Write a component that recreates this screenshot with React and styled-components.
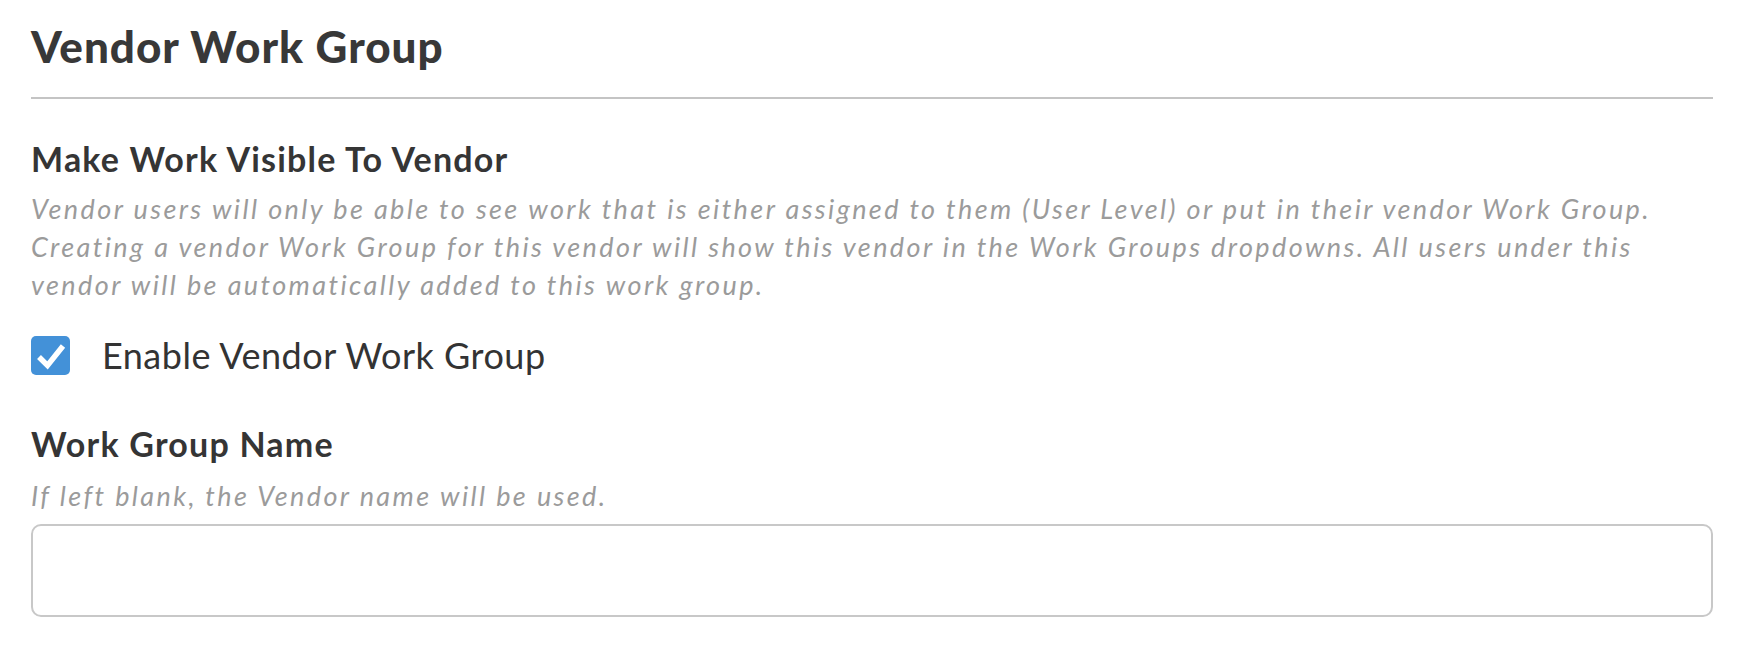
import React, { useState } from "react";
import styled, { createGlobalStyle } from "styled-components";

const GlobalStyle = createGlobalStyle`
  body {
    margin: 0;
    background: #fff;
    font-family: Lato, "Open Sans", Arial, sans-serif;
    color: #333;
  }
`;

const Page = styled.div`
  padding: 21px 31px 0 31px;
`;

const SectionTitle = styled.h1`
  margin: 0;
  font-size: 44px;
  line-height: 50px;
  font-weight: 900;
  letter-spacing: 1px;
  color: #383838;
  padding-bottom: 26px;
  border-bottom: 2px solid #c4c4c4;
`;

const Field = styled.div`
  margin-top: ${(p) => p.top}px;
`;

const Label = styled.div`
  font-size: 34px;
  line-height: 40px;
  font-weight: 700;
  letter-spacing: 1.2px;
  color: #353535;
`;

const Help = styled.p`
  margin: ${(p) => p.gap || 0}px 0 0;
  font-size: 27px;
  line-height: 38px;
  font-style: italic;
  letter-spacing: 2.4px;
  color: #9b9b9b;
`;

const CheckRow = styled.label`
  display: flex;
  align-items: center;
  gap: 32px;
  margin-top: 31px;
  cursor: pointer;
`;

const Box = styled.span`
  box-sizing: border-box;
  width: 39px;
  height: 39px;
  border-radius: 5px;
  background: ${(p) => (p.checked ? "#4391d8" : "#fff")};
  border: ${(p) => (p.checked ? "none" : "2px solid #c8c8c8")};
  display: flex;
  flex-shrink: 0;
`;

const CheckText = styled.span`
  font-size: 36px;
  line-height: 40px;
  letter-spacing: 0.5px;
  color: #333;
`;

const TextInput = styled.input`
  display: block;
  box-sizing: border-box;
  width: 100%;
  height: 93px;
  margin-top: 9px;
  border: 2px solid #c8c8c8;
  border-radius: 10px;
  padding: 0 20px;
  font-family: inherit;
  font-size: 28px;
  color: #333;
  outline: none;
`;

const App = () => {
  const [enabled, setEnabled] = useState(true);
  const [name, setName] = useState("");

  return (
    <Page>
      <GlobalStyle />
      <SectionTitle>Vendor Work Group</SectionTitle>

      <Field top={40}>
        <Label>Make Work Visible To Vendor</Label>
        <Help gap={11}>
          Vendor users will only be able to see work that is either assigned to
          them (User Level) or put in their vendor Work Group. Creating a vendor
          Work Group for this vendor will show this vendor in the Work Groups
          dropdowns. All users under this vendor will be automatically added to
          this work group.
        </Help>
        <CheckRow onClick={() => setEnabled(!enabled)}>
          <Box checked={enabled}>
            {enabled && (
              <svg width="39" height="39" viewBox="0 0 39 39">
                <path
                  d="M8 21 L16.5 29.5 L32 10"
                  fill="none"
                  stroke="#fff"
                  strokeWidth="5.5"
                />
              </svg>
            )}
          </Box>
          <CheckText>Enable Vendor Work Group</CheckText>
        </CheckRow>
      </Field>

      <Field top={49}>
        <Label>Work Group Name</Label>
        <Help gap={13}>If left blank, the Vendor name will be used.</Help>
        <TextInput value={name} onChange={(e) => setName(e.target.value)} />
      </Field>
    </Page>
  );
};

export default App;
